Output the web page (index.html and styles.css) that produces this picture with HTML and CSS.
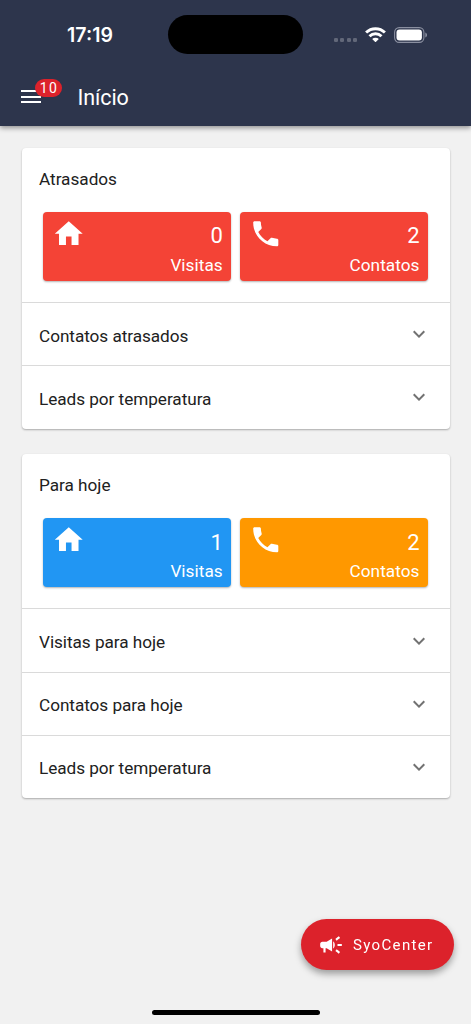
FILE: index.html
```html
<!DOCTYPE html>
<html lang="pt-BR">

<head>
  <meta charset="UTF-8">
  <meta name="viewport" content="width=device-width, initial-scale=1">
  <title>Início</title>
  <link rel="stylesheet" href="styles.css">
</head>

<body>
  <!-- shared icons -->
  <svg class="sprite" aria-hidden="true">
    <symbol id="home" viewBox="0 0 24 24">
      <path d="M10 20v-6h4v6h5v-8h3L12 3 2 12h3v8z" />
    </symbol>
    <symbol id="phone" viewBox="0 0 24 24">
      <path d="M6.62 10.79c1.44 2.83 3.76 5.14 6.59 6.59l2.2-2.2c.27-.27.67-.36 1.02-.24 1.12.37 2.33.57 3.57.57.55 0 1 .45 1 1V20c0 .55-.45 1-1 1-9.39 0-17-7.61-17-17 0-.55.45-1 1-1h3.500c.55 0 1 .45 1 1 0 1.250.2 2.450.57 3.570.11.35.03.74-.25 1.020l-2.200 2.200z" />
    </symbol>
    <symbol id="chevron" viewBox="0 0 24 24">
      <path d="M16.59 8.59 12 13.17 7.41 8.59 6 10l6 6 6-6z" />
    </symbol>
  </svg>

  <header class="app-header">
    <div class="status-bar">
      <span class="clock">17:19</span>
      <span class="island"></span>
      <div class="status-icons">
        <span class="signal"><i></i><i></i><i></i><i></i></span>
        <svg class="wifi" viewBox="0 0 20 15">
          <g fill="none" stroke="#fff" stroke-width="2.8">
            <path d="M.9 5.400a13 13 0 0 1 18.200 0" />
            <path d="M4.200 8.900a8.300 8.300 0 0 1 11.600 0" />
          </g>
          <path d="M10 14.800 6.800 11.600a4.600 4.600 0 0 1 6.400 0z" fill="#fff" />
        </svg>
        <svg class="battery" viewBox="0 0 34 16">
          <rect x=".6" y=".6" width="29.3" height="14.8" rx="4.6" fill="none" stroke="#8a8fa0" stroke-width="1.1" />
          <rect x="2.5" y="2.6" width="25.4" height="10.8" rx="3" fill="#fff" />
          <path d="M31.3 5.5c2.3.8 2.3 4.2 0 5z" fill="#8a8fa0" />
        </svg>
      </div>
    </div>
    <div class="toolbar">
      <button type="button" class="menu" aria-label="Menu">
        <span></span><span></span><span></span>
        <em class="badge">10</em>
      </button>
      <h1>Início</h1>
    </div>
  </header>

  <main>
    <section class="card">
      <div class="summary">
        <h2>Atrasados</h2>
        <div class="tiles">
          <div class="tile red">
            <svg><use href="#home" /></svg>
            <div class="tile-text"><strong>0</strong><span>Visitas</span></div>
          </div>
          <div class="tile red">
            <svg><use href="#phone" /></svg>
            <div class="tile-text"><strong>2</strong><span>Contatos</span></div>
          </div>
        </div>
      </div>
      <div class="row"><span>Contatos atrasados</span><svg><use href="#chevron" /></svg></div>
      <div class="row"><span>Leads por temperatura</span><svg><use href="#chevron" /></svg></div>
    </section>

    <section class="card">
      <div class="summary">
        <h2>Para hoje</h2>
        <div class="tiles">
          <div class="tile blue">
            <svg><use href="#home" /></svg>
            <div class="tile-text"><strong>1</strong><span>Visitas</span></div>
          </div>
          <div class="tile orange">
            <svg><use href="#phone" /></svg>
            <div class="tile-text"><strong>2</strong><span>Contatos</span></div>
          </div>
        </div>
      </div>
      <div class="row"><span>Visitas para hoje</span><svg><use href="#chevron" /></svg></div>
      <div class="row"><span>Contatos para hoje</span><svg><use href="#chevron" /></svg></div>
      <div class="row"><span>Leads por temperatura</span><svg><use href="#chevron" /></svg></div>
    </section>
  </main>

  <button type="button" class="fab">
    <svg viewBox="0 0 24 24">
      <path d="M18 11v2h4v-2h-4zm-2 6.61c.96.71 2.21 1.65 3.2 2.39.4-.53.8-1.07 1.2-1.6-.99-.74-2.24-1.68-3.2-2.4-.4.54-.8 1.08-1.2 1.61zM20.4 5.6c-.4-.53-.8-1.07-1.2-1.6-.99.74-2.24 1.68-3.2 2.4.4.53.8 1.07 1.2 1.6.96-.72 2.21-1.65 3.2-2.4zM4 9c-1.1 0-2 .9-2 2v2c0 1.1.9 2 2 2h1v4h2v-4h1l5 3V6L8 9H4zm11.5 3c0-1.33-.58-2.53-1.5-3.35v6.69c.92-.81 1.5-2.01 1.5-3.34z" />
    </svg>
    SyoCenter
  </button>
  <div class="home-indicator"></div>
</body>

</html>
```
FILE: styles.css
```css
* {
  box-sizing: border-box;
}

body {
  margin: 0;
  height: 1024px;
  overflow: hidden;
  background-color: #f1f1f1;
  color: #212121;
  font-family: Roboto, "Liberation Sans", sans-serif;
}

h1,
h2 {
  margin: 0;
  font-weight: 400;
}

button {
  border: none;
  font-family: inherit;
}

.sprite {
  display: none;
}

/* header */
.app-header {
  height: 126.4px;
  background-color: #2d354c;
  color: #fff;
  box-shadow: 0 2px 5px rgba(0, 0, 0, 0.4);
}

.status-bar {
  display: grid;
  grid-template-columns: 168px 135px 1fr;
  align-items: center;
  height: 69px;
}

.clock {
  padding-left: 12px;
  text-align: center;
  font-family: Inter, sans-serif;
  font-size: 19.5px;
  font-weight: 600;
}

.island {
  height: 39px;
  border-radius: 20px;
  background: #000;
}

.status-icons {
  display: flex;
  align-items: center;
  padding-left: 31px;
}

.signal {
  display: flex;
  gap: 2.4px;
  margin: 10px 8px 0 0;
}

.signal i {
  width: 4px;
  height: 4px;
  border-radius: 1.3px;
  background: #626879;
}

.wifi {
  width: 21px;
  height: 15.5px;
  margin-right: 8px;
}

.battery {
  width: 34px;
  height: 16px;
}

.toolbar {
  display: flex;
  align-items: center;
  height: 57px;
  padding-left: 20.5px;
}

.menu {
  position: relative;
  display: flex;
  flex-direction: column;
  gap: 3.5px;
  width: 20px;
  margin-top: -2px;
  padding: 0;
  background: none;
}

.menu span {
  height: 2px;
  background: #fff;
}

.badge {
  position: absolute;
  left: 14.5px;
  top: -11.5px;
  width: 27px;
  height: 18px;
  border-radius: 9px;
  padding-left: 1px;
  background: #dc222b;
  color: #fff;
  font-size: 14px;
  font-style: normal;
  font-weight: 400;
  line-height: 18px;
  letter-spacing: 1.5px;
  text-align: center;
}

.toolbar h1 {
  margin-left: 37px;
  font-size: 21.5px;
  letter-spacing: -0.1px;
}

/* cards */
main {
  display: flex;
  flex-direction: column;
  gap: 25.7px;
  padding: 21.6px 21.5px;
}

.card {
  border-radius: 4px;
  background: #fff;
  box-shadow: 0 1px 2px rgba(0, 0, 0, 0.3);
}

.summary {
  height: 154.2px;
  padding: 20px 21.5px 0;
}

.summary h2 {
  margin-left: -4px;
  font-size: 17.2px;
  line-height: 22px;
  letter-spacing: -0.02px;
}

.tiles {
  display: grid;
  grid-template-columns: 1fr 1fr;
  gap: 8.5px;
  margin-top: 22px;
}

.tile {
  display: flex;
  justify-content: space-between;
  height: 68.6px;
  padding: 5px 8.5px 0 9px;
  border-radius: 4px;
  color: #fff;
  box-shadow: 0 1px 2px rgba(0, 0, 0, 0.3);
}

.tile svg {
  width: 33.5px;
  height: 33.5px;
  fill: #fff;
}

.tile-text {
  display: flex;
  flex-direction: column;
  align-items: flex-end;
}

.tile strong {
  margin-top: 5.5px;
  font-size: 22px;
  font-weight: 400;
  line-height: 28px;
}

.tile span {
  margin-top: 4.5px;
  font-size: 17.2px;
  line-height: 20px;
  letter-spacing: 0.05px;
}

.red {
  background: #f44336;
}

.blue {
  background: #2196f3;
}

.orange {
  background: #ff9800;
}

.row {
  display: flex;
  justify-content: space-between;
  align-items: center;
  height: 63.2px;
  padding: 2.5px 18.500px 0 17.5px;
  border-top: 1px solid #dadada;
  font-size: 17.2px;
  letter-spacing: -0.05px;
}

.row svg {
  width: 24px;
  height: 24px;
  margin-top: -2.5px;
  fill: #727272;
}

/* floating button */
.fab {
  position: fixed;
  right: 17.5px;
  bottom: 54px;
  display: flex;
  align-items: center;
  gap: 9px;
  width: 152.5px;
  height: 51px;
  padding: 0 0 0 17px;
  border-radius: 26px;
  background: #dc222b;
  color: #fff;
  font-size: 15px;
  letter-spacing: 1.35px;
  box-shadow: 0 4px 7px rgba(0, 0, 0, 0.35);
}

.fab svg {
  width: 26px;
  height: 26px;
  fill: #fff;
}

.home-indicator {
  position: fixed;
  left: 152px;
  bottom: 9px;
  width: 168px;
  height: 5.5px;
  border-radius: 3px;
  background: #000;
}
```
